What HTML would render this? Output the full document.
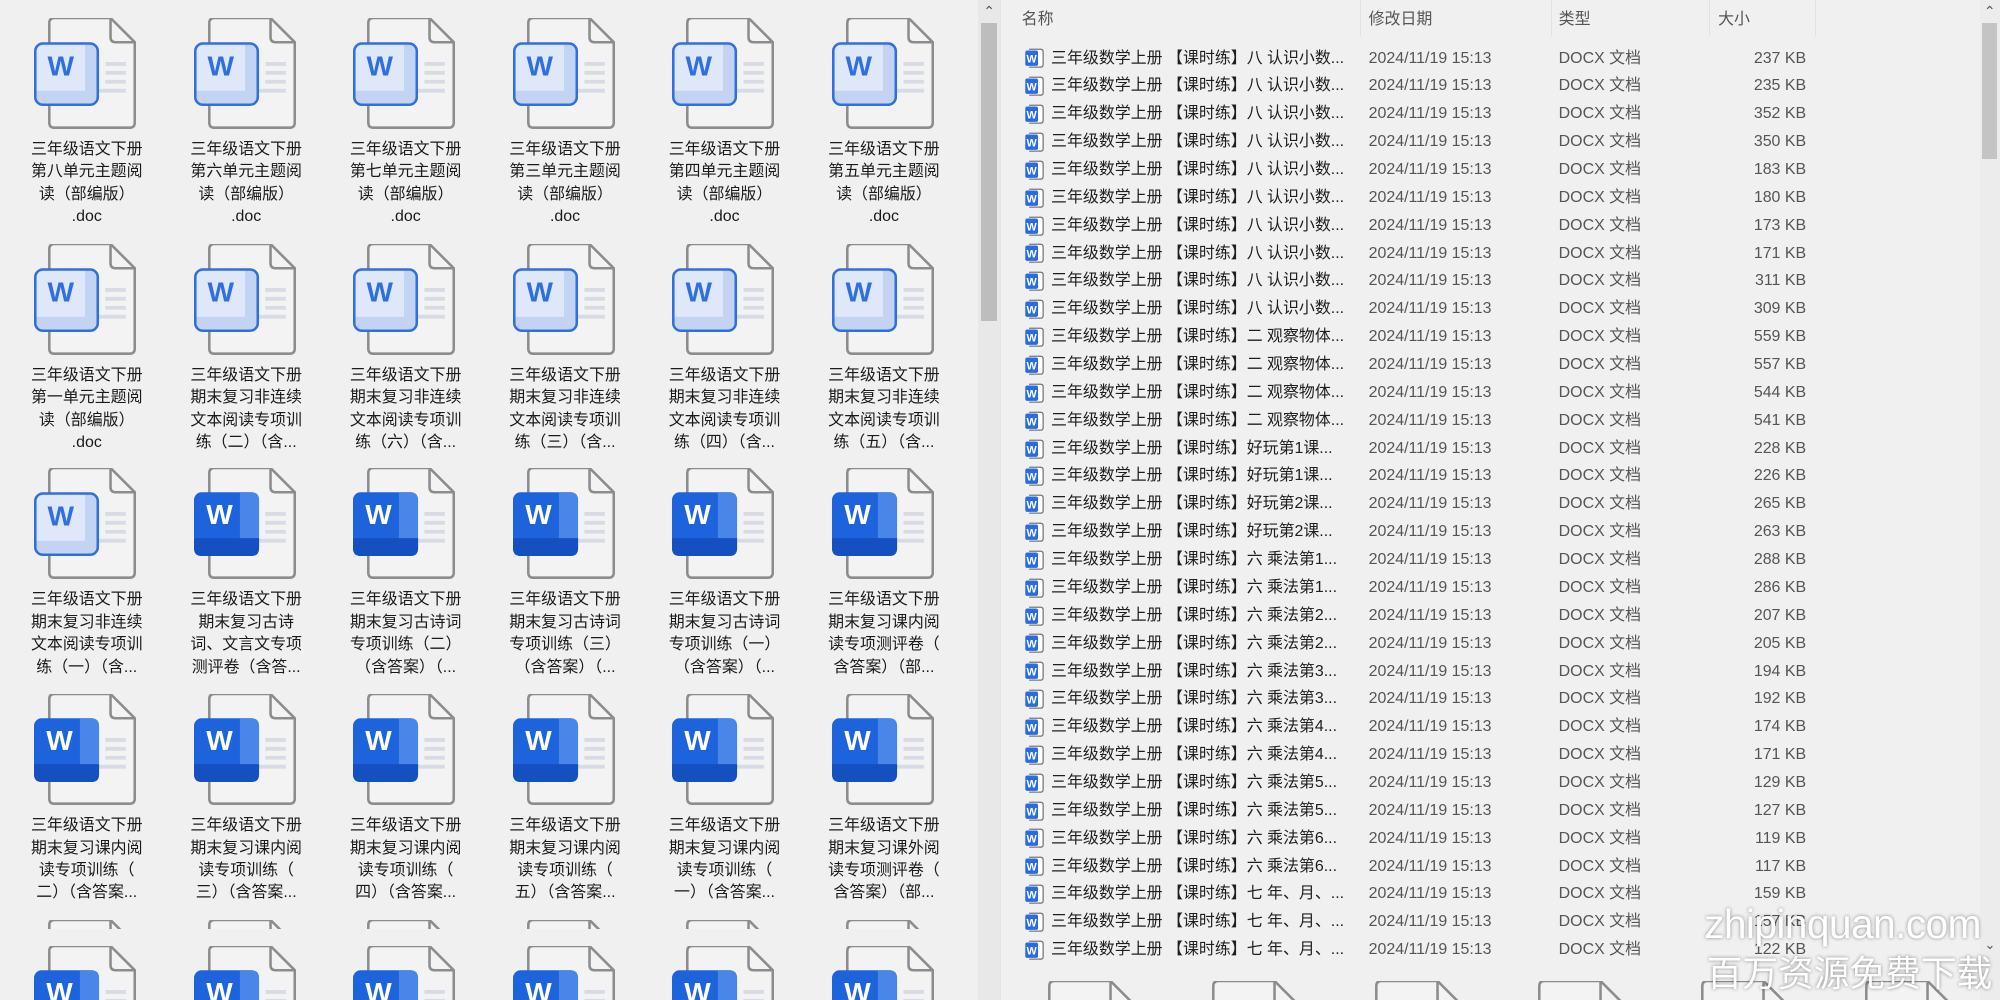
<!DOCTYPE html>
<html><head><meta charset="utf-8">
<style>
*{margin:0;padding:0;box-sizing:border-box}
html,body{width:2000px;height:1000px;overflow:hidden;background:#f0f0f0}
#root{position:absolute;left:0;top:0;width:1568px;height:784px;zoom:1.27551;font-family:"Liberation Sans","Noto Sans CJK SC",sans-serif;overflow:hidden;background:#f0f0f0}
.cell{position:absolute;width:125px;height:176px;overflow:visible}
.cell svg{position:absolute;left:0;top:0}
.lbl{position:absolute;left:0;width:136px;top:95px;text-align:center;font-size:12.5px;line-height:17.6px;color:#1a1a1a}
.rows{position:absolute;left:0;top:2px;width:1568px;height:760px}
.row{position:absolute;left:800px;height:22px;font-size:12.5px;line-height:22px;white-space:nowrap;width:750px}
.row .ic{position:absolute;left:3px;top:3px}
.row .n{position:absolute;left:24px;color:#1e1e1e}
.row .d{position:absolute;left:273px;color:#555}
.row .t{position:absolute;left:422px;color:#555}
.row .s{position:absolute;left:540px;width:76px;text-align:right;color:#555}
.hd{position:absolute;top:5px;font-size:12.5px;color:#555}
.sep{position:absolute;top:0;width:1px;height:28px;background:#e2e2e2}
</style></head><body>
<svg width="0" height="0" style="position:absolute">
<defs>
<symbol id="pg" viewBox="0 0 80 90">
<path d="M16 0H60L79 19V82Q79 86 75 86H16Q12 86 12 82V4Q12 0 16 0Z" fill="#f3f3f3" stroke="#8c8c8c" stroke-width="2"/>
<path d="M60 0V15Q60 19 64 19H79" fill="none" stroke="#8c8c8c" stroke-width="2"/>
<path d="M56 36H72M56 43H72M56 50H72M24 57H72" stroke="#d6dbe4" stroke-width="3"/>
</symbol>
<symbol id="lt" viewBox="0 0 80 90">
<use href="#pg"/>
<rect x="1" y="20" width="49" height="48" rx="6" fill="#dfe8f8"/>
<path d="M40 21H44Q49 21 49 26V62Q49 67 44 67H40Z" fill="#c3d4f2"/>
<path d="M2 57H49V62Q49 67 44 67H7Q2 67 2 62Z" fill="#c3d4f2"/>
<rect x="1" y="20" width="49" height="48" rx="6" fill="none" stroke="#2f6fde" stroke-width="2"/>
<text x="21" y="45" text-anchor="middle" font-family="Liberation Sans,sans-serif" font-weight="bold" font-size="22" fill="#2f6fde">W</text>
</symbol>
<symbol id="dk" viewBox="0 0 80 90">
<use href="#pg"/>
<rect x="0" y="19" width="51" height="50" rx="6" fill="#1d63dc"/>
<path d="M36 19H45Q51 19 51 25V63Q51 69 45 69H36Z" fill="#4a86e8"/>
<path d="M0 55H51V63Q51 69 45 69H6Q0 69 0 63Z" fill="#1550c0"/>
<text x="20" y="44" text-anchor="middle" font-family="Liberation Sans,sans-serif" font-weight="bold" font-size="22" fill="#fff">W</text>
</symbol>
<symbol id="sm" viewBox="0 0 16 16">
<path d="M4 1H13Q15 1 15 3V13Q15 15 13 15H4" fill="#fff" stroke="#777" stroke-width="1"/>
<rect x="1" y="2" width="10" height="12" rx="1.5" fill="#2a6be0"/>
<text x="6" y="11.5" text-anchor="middle" font-family="Liberation Sans,sans-serif" font-weight="bold" font-size="8.5" fill="#fff">W</text>
</symbol>
</defs></svg>
<div id="root">

<div class="cell" style="left:0;top:14px"><svg width="80" height="90" style="left:27px"><use href="#lt"/></svg><div class="lbl">三年级语文下册<br>第八单元主题阅<br>读（部编版）<br>.doc</div></div>
<div class="cell" style="left:125px;top:14px"><svg width="80" height="90" style="left:27px"><use href="#lt"/></svg><div class="lbl">三年级语文下册<br>第六单元主题阅<br>读（部编版）<br>.doc</div></div>
<div class="cell" style="left:250px;top:14px"><svg width="80" height="90" style="left:27px"><use href="#lt"/></svg><div class="lbl">三年级语文下册<br>第七单元主题阅<br>读（部编版）<br>.doc</div></div>
<div class="cell" style="left:375px;top:14px"><svg width="80" height="90" style="left:27px"><use href="#lt"/></svg><div class="lbl">三年级语文下册<br>第三单元主题阅<br>读（部编版）<br>.doc</div></div>
<div class="cell" style="left:500px;top:14px"><svg width="80" height="90" style="left:27px"><use href="#lt"/></svg><div class="lbl">三年级语文下册<br>第四单元主题阅<br>读（部编版）<br>.doc</div></div>
<div class="cell" style="left:625px;top:14px"><svg width="80" height="90" style="left:27px"><use href="#lt"/></svg><div class="lbl">三年级语文下册<br>第五单元主题阅<br>读（部编版）<br>.doc</div></div>

<div class="cell" style="left:0;top:191px"><svg width="80" height="90" style="left:27px"><use href="#lt"/></svg><div class="lbl">三年级语文下册<br>第一单元主题阅<br>读（部编版）<br>.doc</div></div>
<div class="cell" style="left:125px;top:191px"><svg width="80" height="90" style="left:27px"><use href="#lt"/></svg><div class="lbl">三年级语文下册<br>期末复习非连续<br>文本阅读专项训<br>练（二）（含...</div></div>
<div class="cell" style="left:250px;top:191px"><svg width="80" height="90" style="left:27px"><use href="#lt"/></svg><div class="lbl">三年级语文下册<br>期末复习非连续<br>文本阅读专项训<br>练（六）（含...</div></div>
<div class="cell" style="left:375px;top:191px"><svg width="80" height="90" style="left:27px"><use href="#lt"/></svg><div class="lbl">三年级语文下册<br>期末复习非连续<br>文本阅读专项训<br>练（三）（含...</div></div>
<div class="cell" style="left:500px;top:191px"><svg width="80" height="90" style="left:27px"><use href="#lt"/></svg><div class="lbl">三年级语文下册<br>期末复习非连续<br>文本阅读专项训<br>练（四）（含...</div></div>
<div class="cell" style="left:625px;top:191px"><svg width="80" height="90" style="left:27px"><use href="#lt"/></svg><div class="lbl">三年级语文下册<br>期末复习非连续<br>文本阅读专项训<br>练（五）（含...</div></div>

<div class="cell" style="left:0;top:367px"><svg width="80" height="90" style="left:27px"><use href="#lt"/></svg><div class="lbl">三年级语文下册<br>期末复习非连续<br>文本阅读专项训<br>练（一）（含...</div></div>
<div class="cell" style="left:125px;top:367px"><svg width="80" height="90" style="left:27px"><use href="#dk"/></svg><div class="lbl">三年级语文下册<br>期末复习古诗<br>词、文言文专项<br>测评卷（含答...</div></div>
<div class="cell" style="left:250px;top:367px"><svg width="80" height="90" style="left:27px"><use href="#dk"/></svg><div class="lbl">三年级语文下册<br>期末复习古诗词<br>专项训练（二）<br>（含答案）（...</div></div>
<div class="cell" style="left:375px;top:367px"><svg width="80" height="90" style="left:27px"><use href="#dk"/></svg><div class="lbl">三年级语文下册<br>期末复习古诗词<br>专项训练（三）<br>（含答案）（...</div></div>
<div class="cell" style="left:500px;top:367px"><svg width="80" height="90" style="left:27px"><use href="#dk"/></svg><div class="lbl">三年级语文下册<br>期末复习古诗词<br>专项训练（一）<br>（含答案）（...</div></div>
<div class="cell" style="left:625px;top:367px"><svg width="80" height="90" style="left:27px"><use href="#dk"/></svg><div class="lbl">三年级语文下册<br>期末复习课内阅<br>读专项测评卷（<br>含答案）（部...</div></div>

<div class="cell" style="left:0;top:544px"><svg width="80" height="90" style="left:27px"><use href="#dk"/></svg><div class="lbl">三年级语文下册<br>期末复习课内阅<br>读专项训练（<br>二）（含答案...</div></div>
<div class="cell" style="left:125px;top:544px"><svg width="80" height="90" style="left:27px"><use href="#dk"/></svg><div class="lbl">三年级语文下册<br>期末复习课内阅<br>读专项训练（<br>三）（含答案...</div></div>
<div class="cell" style="left:250px;top:544px"><svg width="80" height="90" style="left:27px"><use href="#dk"/></svg><div class="lbl">三年级语文下册<br>期末复习课内阅<br>读专项训练（<br>四）（含答案...</div></div>
<div class="cell" style="left:375px;top:544px"><svg width="80" height="90" style="left:27px"><use href="#dk"/></svg><div class="lbl">三年级语文下册<br>期末复习课内阅<br>读专项训练（<br>五）（含答案...</div></div>
<div class="cell" style="left:500px;top:544px"><svg width="80" height="90" style="left:27px"><use href="#dk"/></svg><div class="lbl">三年级语文下册<br>期末复习课内阅<br>读专项训练（<br>一）（含答案...</div></div>
<div class="cell" style="left:625px;top:544px"><svg width="80" height="90" style="left:27px"><use href="#dk"/></svg><div class="lbl">三年级语文下册<br>期末复习课外阅<br>读专项测评卷（<br>含答案）（部...</div></div>

<div style="position:absolute;left:0;top:721px;width:760px;height:7px;overflow:hidden">
<svg width="80" height="90" style="position:absolute;left:27px;top:0"><use href="#pg"/></svg>
<svg width="80" height="90" style="position:absolute;left:152px;top:0"><use href="#pg"/></svg>
<svg width="80" height="90" style="position:absolute;left:277px;top:0"><use href="#pg"/></svg>
<svg width="80" height="90" style="position:absolute;left:402px;top:0"><use href="#pg"/></svg>
<svg width="80" height="90" style="position:absolute;left:527px;top:0"><use href="#pg"/></svg>
<svg width="80" height="90" style="position:absolute;left:652px;top:0"><use href="#pg"/></svg>
</div>
<div style="position:absolute;left:0;top:742px;width:760px;height:42px;overflow:hidden">
<svg width="80" height="90" style="position:absolute;left:27px;top:0"><use href="#dk"/></svg>
<svg width="80" height="90" style="position:absolute;left:152px;top:0"><use href="#dk"/></svg>
<svg width="80" height="90" style="position:absolute;left:277px;top:0"><use href="#dk"/></svg>
<svg width="80" height="90" style="position:absolute;left:402px;top:0"><use href="#dk"/></svg>
<svg width="80" height="90" style="position:absolute;left:527px;top:0"><use href="#dk"/></svg>
<svg width="80" height="90" style="position:absolute;left:652px;top:0"><use href="#dk"/></svg>
</div>

<div style="position:absolute;left:767px;top:0;width:17px;height:784px;background:#e8e8e8"></div>
<div style="position:absolute;left:769px;top:0;width:13px;height:18px;color:#555;font-size:11px;text-align:center;line-height:18px">&#8963;</div>
<div style="position:absolute;left:769px;top:18px;width:13px;height:234px;background:#bdbdbd"></div>
<div style="position:absolute;left:784px;top:0;width:1px;height:784px;background:#e4e4e4"></div>

<div style="position:absolute;left:925px;top:-5px;font-size:11px;color:#777">&#8963;</div>
<div class="hd" style="left:801px">名称</div>
<div class="sep" style="left:1066px"></div>
<div class="hd" style="left:1073px">修改日期</div>
<div class="sep" style="left:1216px"></div>
<div class="hd" style="left:1222px">类型</div>
<div class="sep" style="left:1340px"></div>
<div class="hd" style="left:1347px">大小</div>
<div class="sep" style="left:1423px"></div>

<div class="rows">
<div class="row" style="top:33px"><svg class="ic" width="16" height="16"><use href="#sm"/></svg><span class="n">三年级数学上册 【课时练】八 认识小数...</span><span class="d">2024/11/19 15:13</span><span class="t">DOCX 文档</span><span class="s">237 KB</span></div>
<div class="row" style="top:54.8px"><svg class="ic" width="16" height="16"><use href="#sm"/></svg><span class="n">三年级数学上册 【课时练】八 认识小数...</span><span class="d">2024/11/19 15:13</span><span class="t">DOCX 文档</span><span class="s">235 KB</span></div>
<div class="row" style="top:76.7px"><svg class="ic" width="16" height="16"><use href="#sm"/></svg><span class="n">三年级数学上册 【课时练】八 认识小数...</span><span class="d">2024/11/19 15:13</span><span class="t">DOCX 文档</span><span class="s">352 KB</span></div>
<div class="row" style="top:98.5px"><svg class="ic" width="16" height="16"><use href="#sm"/></svg><span class="n">三年级数学上册 【课时练】八 认识小数...</span><span class="d">2024/11/19 15:13</span><span class="t">DOCX 文档</span><span class="s">350 KB</span></div>
<div class="row" style="top:120.4px"><svg class="ic" width="16" height="16"><use href="#sm"/></svg><span class="n">三年级数学上册 【课时练】八 认识小数...</span><span class="d">2024/11/19 15:13</span><span class="t">DOCX 文档</span><span class="s">183 KB</span></div>
<div class="row" style="top:142.2px"><svg class="ic" width="16" height="16"><use href="#sm"/></svg><span class="n">三年级数学上册 【课时练】八 认识小数...</span><span class="d">2024/11/19 15:13</span><span class="t">DOCX 文档</span><span class="s">180 KB</span></div>
<div class="row" style="top:164px"><svg class="ic" width="16" height="16"><use href="#sm"/></svg><span class="n">三年级数学上册 【课时练】八 认识小数...</span><span class="d">2024/11/19 15:13</span><span class="t">DOCX 文档</span><span class="s">173 KB</span></div>
<div class="row" style="top:185.9px"><svg class="ic" width="16" height="16"><use href="#sm"/></svg><span class="n">三年级数学上册 【课时练】八 认识小数...</span><span class="d">2024/11/19 15:13</span><span class="t">DOCX 文档</span><span class="s">171 KB</span></div>
<div class="row" style="top:207.7px"><svg class="ic" width="16" height="16"><use href="#sm"/></svg><span class="n">三年级数学上册 【课时练】八 认识小数...</span><span class="d">2024/11/19 15:13</span><span class="t">DOCX 文档</span><span class="s">311 KB</span></div>
<div class="row" style="top:229.6px"><svg class="ic" width="16" height="16"><use href="#sm"/></svg><span class="n">三年级数学上册 【课时练】八 认识小数...</span><span class="d">2024/11/19 15:13</span><span class="t">DOCX 文档</span><span class="s">309 KB</span></div>
<div class="row" style="top:251.4px"><svg class="ic" width="16" height="16"><use href="#sm"/></svg><span class="n">三年级数学上册 【课时练】二 观察物体...</span><span class="d">2024/11/19 15:13</span><span class="t">DOCX 文档</span><span class="s">559 KB</span></div>
<div class="row" style="top:273.2px"><svg class="ic" width="16" height="16"><use href="#sm"/></svg><span class="n">三年级数学上册 【课时练】二 观察物体...</span><span class="d">2024/11/19 15:13</span><span class="t">DOCX 文档</span><span class="s">557 KB</span></div>
<div class="row" style="top:295.1px"><svg class="ic" width="16" height="16"><use href="#sm"/></svg><span class="n">三年级数学上册 【课时练】二 观察物体...</span><span class="d">2024/11/19 15:13</span><span class="t">DOCX 文档</span><span class="s">544 KB</span></div>
<div class="row" style="top:316.9px"><svg class="ic" width="16" height="16"><use href="#sm"/></svg><span class="n">三年级数学上册 【课时练】二 观察物体...</span><span class="d">2024/11/19 15:13</span><span class="t">DOCX 文档</span><span class="s">541 KB</span></div>
<div class="row" style="top:338.8px"><svg class="ic" width="16" height="16"><use href="#sm"/></svg><span class="n">三年级数学上册 【课时练】好玩第1课...</span><span class="d">2024/11/19 15:13</span><span class="t">DOCX 文档</span><span class="s">228 KB</span></div>
<div class="row" style="top:360.6px"><svg class="ic" width="16" height="16"><use href="#sm"/></svg><span class="n">三年级数学上册 【课时练】好玩第1课...</span><span class="d">2024/11/19 15:13</span><span class="t">DOCX 文档</span><span class="s">226 KB</span></div>
<div class="row" style="top:382.4px"><svg class="ic" width="16" height="16"><use href="#sm"/></svg><span class="n">三年级数学上册 【课时练】好玩第2课...</span><span class="d">2024/11/19 15:13</span><span class="t">DOCX 文档</span><span class="s">265 KB</span></div>
<div class="row" style="top:404.3px"><svg class="ic" width="16" height="16"><use href="#sm"/></svg><span class="n">三年级数学上册 【课时练】好玩第2课...</span><span class="d">2024/11/19 15:13</span><span class="t">DOCX 文档</span><span class="s">263 KB</span></div>
<div class="row" style="top:426.1px"><svg class="ic" width="16" height="16"><use href="#sm"/></svg><span class="n">三年级数学上册 【课时练】六 乘法第1...</span><span class="d">2024/11/19 15:13</span><span class="t">DOCX 文档</span><span class="s">288 KB</span></div>
<div class="row" style="top:448px"><svg class="ic" width="16" height="16"><use href="#sm"/></svg><span class="n">三年级数学上册 【课时练】六 乘法第1...</span><span class="d">2024/11/19 15:13</span><span class="t">DOCX 文档</span><span class="s">286 KB</span></div>
<div class="row" style="top:469.8px"><svg class="ic" width="16" height="16"><use href="#sm"/></svg><span class="n">三年级数学上册 【课时练】六 乘法第2...</span><span class="d">2024/11/19 15:13</span><span class="t">DOCX 文档</span><span class="s">207 KB</span></div>
<div class="row" style="top:491.6px"><svg class="ic" width="16" height="16"><use href="#sm"/></svg><span class="n">三年级数学上册 【课时练】六 乘法第2...</span><span class="d">2024/11/19 15:13</span><span class="t">DOCX 文档</span><span class="s">205 KB</span></div>
<div class="row" style="top:513.5px"><svg class="ic" width="16" height="16"><use href="#sm"/></svg><span class="n">三年级数学上册 【课时练】六 乘法第3...</span><span class="d">2024/11/19 15:13</span><span class="t">DOCX 文档</span><span class="s">194 KB</span></div>
<div class="row" style="top:535.3px"><svg class="ic" width="16" height="16"><use href="#sm"/></svg><span class="n">三年级数学上册 【课时练】六 乘法第3...</span><span class="d">2024/11/19 15:13</span><span class="t">DOCX 文档</span><span class="s">192 KB</span></div>
<div class="row" style="top:557.2px"><svg class="ic" width="16" height="16"><use href="#sm"/></svg><span class="n">三年级数学上册 【课时练】六 乘法第4...</span><span class="d">2024/11/19 15:13</span><span class="t">DOCX 文档</span><span class="s">174 KB</span></div>
<div class="row" style="top:579px"><svg class="ic" width="16" height="16"><use href="#sm"/></svg><span class="n">三年级数学上册 【课时练】六 乘法第4...</span><span class="d">2024/11/19 15:13</span><span class="t">DOCX 文档</span><span class="s">171 KB</span></div>
<div class="row" style="top:600.8px"><svg class="ic" width="16" height="16"><use href="#sm"/></svg><span class="n">三年级数学上册 【课时练】六 乘法第5...</span><span class="d">2024/11/19 15:13</span><span class="t">DOCX 文档</span><span class="s">129 KB</span></div>
<div class="row" style="top:622.7px"><svg class="ic" width="16" height="16"><use href="#sm"/></svg><span class="n">三年级数学上册 【课时练】六 乘法第5...</span><span class="d">2024/11/19 15:13</span><span class="t">DOCX 文档</span><span class="s">127 KB</span></div>
<div class="row" style="top:644.5px"><svg class="ic" width="16" height="16"><use href="#sm"/></svg><span class="n">三年级数学上册 【课时练】六 乘法第6...</span><span class="d">2024/11/19 15:13</span><span class="t">DOCX 文档</span><span class="s">119 KB</span></div>
<div class="row" style="top:666.4px"><svg class="ic" width="16" height="16"><use href="#sm"/></svg><span class="n">三年级数学上册 【课时练】六 乘法第6...</span><span class="d">2024/11/19 15:13</span><span class="t">DOCX 文档</span><span class="s">117 KB</span></div>
<div class="row" style="top:688.2px"><svg class="ic" width="16" height="16"><use href="#sm"/></svg><span class="n">三年级数学上册 【课时练】七 年、月、...</span><span class="d">2024/11/19 15:13</span><span class="t">DOCX 文档</span><span class="s">159 KB</span></div>
<div class="row" style="top:710px"><svg class="ic" width="16" height="16"><use href="#sm"/></svg><span class="n">三年级数学上册 【课时练】七 年、月、...</span><span class="d">2024/11/19 15:13</span><span class="t">DOCX 文档</span><span class="s">157 KB</span></div>
<div class="row" style="top:731.9px"><svg class="ic" width="16" height="16"><use href="#sm"/></svg><span class="n">三年级数学上册 【课时练】七 年、月、...</span><span class="d">2024/11/19 15:13</span><span class="t">DOCX 文档</span><span class="s">122 KB</span></div>
</div>

<div style="position:absolute;left:790px;top:769px;width:760px;height:15px;overflow:hidden">
<svg width="80" height="90" style="position:absolute;left:21px;top:0"><use href="#pg"/></svg>
<svg width="80" height="90" style="position:absolute;left:149px;top:0"><use href="#pg"/></svg>
<svg width="80" height="90" style="position:absolute;left:277px;top:0"><use href="#pg"/></svg>
<svg width="80" height="90" style="position:absolute;left:405px;top:0"><use href="#pg"/></svg>
<svg width="80" height="90" style="position:absolute;left:533px;top:0"><use href="#pg"/></svg>
<svg width="80" height="90" style="position:absolute;left:661px;top:0"><use href="#pg"/></svg>
</div>

<div style="position:absolute;left:1552px;top:0;width:16px;height:784px;background:#ececec"></div>
<div style="position:absolute;left:1552px;top:0;width:16px;height:18px;color:#555;font-size:11px;text-align:center;line-height:18px">&#8963;</div>
<div style="position:absolute;left:1554px;top:18px;width:12px;height:107px;background:#c4c4c4"></div>
<div style="position:absolute;left:1552px;top:735px;width:16px;height:14px;color:#555;font-size:10px;text-align:center">&#8964;</div>

<div style="position:absolute;left:1336px;top:706px;font-size:32px;color:#fff;font-family:'Liberation Sans',sans-serif;text-shadow:0 0 3px rgba(0,0,0,.45);letter-spacing:-0.5px">zhipinquan.com</div>
<div style="position:absolute;left:1338px;top:744px;font-size:28px;color:#fff;font-family:'Noto Sans CJK SC',sans-serif;text-shadow:0 0 3px rgba(0,0,0,.45);line-height:36px">百万资源免费下载</div>
</div>
</body></html>
